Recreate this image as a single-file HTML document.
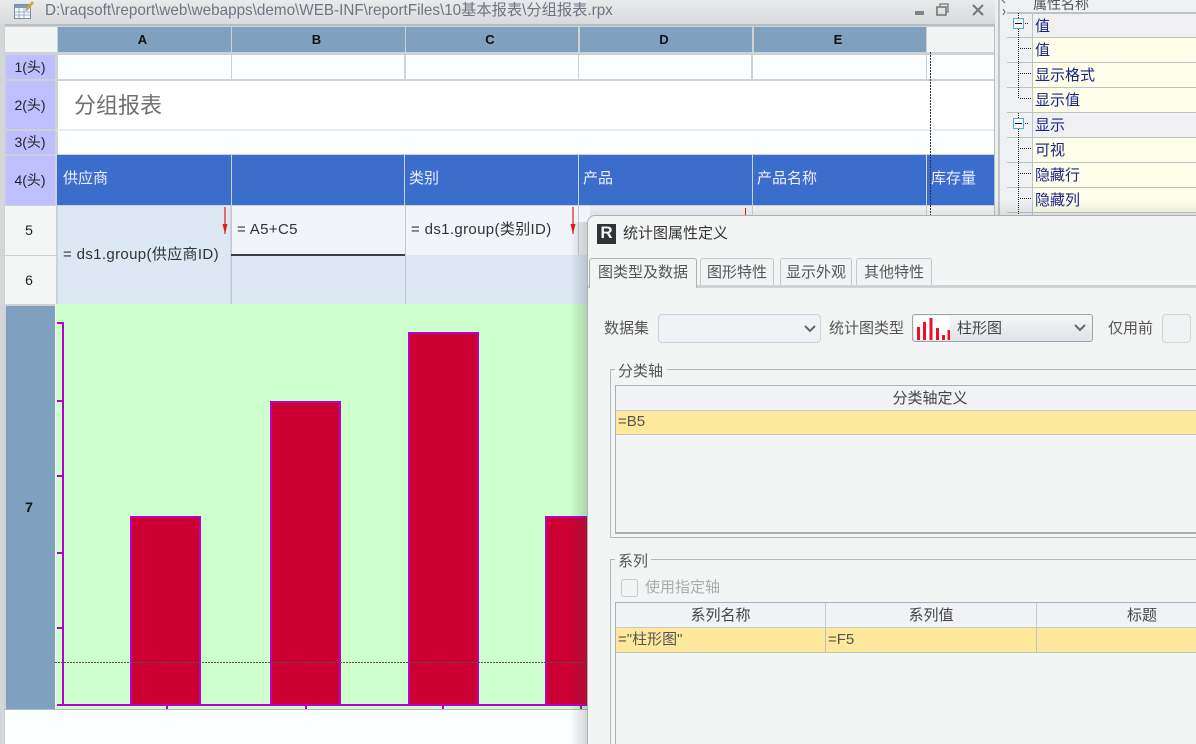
<!DOCTYPE html>
<html style="width:1196px;height:744px;overflow:hidden"><head><meta charset="utf-8">
<style>
*{box-sizing:border-box}
html,body{margin:0;padding:0}
body{width:1196px;height:744px;overflow:hidden;position:relative;background:#e4e6e8;font-family:"Liberation Sans","Noto Sans CJK SC",sans-serif;font-size:14px;color:#222}
div{position:absolute}
.t{white-space:nowrap;line-height:20px}
.hc{background:#7fa0bf;top:27px;height:25px;text-align:center;font-weight:bold;font-size:13px;line-height:26px;color:#111;padding-right:4px}
.rh{left:6px;width:49px;text-align:center;color:#222;font-size:14px;padding-right:1px}
.p{background:#bfbfff}
.w{background:#fcffff}
.blue{background:#3b6dcc;top:155px;height:50px;color:#eef;font-size:15px;line-height:48px;padding-left:5px}
.bar{background:#cc0033;border:2px solid #b800c8;border-bottom:none}
.tick{background:#b800c8}
.prow{left:1033px;width:163px;height:24px;background:#fdfdea;color:#1a2585;font-size:15px;line-height:25px;padding-left:2px}
.prow.g{background:#f0f0f3}
.line{background:#bcc3c6}
.dh{width:1px;background:repeating-linear-gradient(to bottom,#222 0 1px,transparent 1px 2px)}
.dw{height:1px;width:11px;background:repeating-linear-gradient(to right,#222 0 1px,transparent 1px 2px)}
.tab{top:258px;height:27px;background:#f1f3f4;border:1px solid #c3cacd;border-bottom:none;border-radius:3px 3px 0 0;text-align:center;line-height:28px;font-size:15px;color:#555}
.cell{background:#f0f2f5;border-right:1px solid #c3cbd0;border-bottom:1px solid #c3cbd0;text-align:center;font-size:15px;line-height:27px;color:#444;white-space:nowrap}
.yel{background:#fee89b;font-size:15px;line-height:21px;padding-left:2px;color:#555;border-bottom:1px solid #bcc3c6;white-space:nowrap}
.lbl{color:#555;font-size:15px;line-height:20px;white-space:nowrap}
.arrow{width:12px;height:28px}
</style></head>
<body>
<div style="left:0;top:0;width:1196px;height:744px;overflow:hidden;filter:blur(.35px)">

<!-- title bar -->
<div style="left:0;top:0;width:995px;height:24px;background:linear-gradient(#e9eaec,#d8dadc)"></div>
<div style="left:0;top:24px;width:995px;height:2px;background:#b7bdc0"></div>
<svg style="position:absolute;left:13px;top:0" width="22" height="20" viewBox="0 0 22 20"><rect x="1.5" y="4.5" width="16" height="14" fill="#f5f7fa" stroke="#7d8f9f"/><rect x="2" y="5" width="15" height="3" fill="#7a9ac0"/><path d="M6 8v10M11 8v10M2 12h15M2 15h15" stroke="#9db4c9"/><path d="M12 10l7-9 2 2-7 8z" fill="#d9a040"/></svg>
<div class="t" style="left:45px;top:0;font-size:15.25px;color:#6e7580;line-height:21px">D:\raqsoft\report\web\webapps\demo\WEB-INF\reportFiles\10基本报表\分组报表.rpx</div>
<svg style="position:absolute;left:910px;top:0" width="80" height="20" viewBox="0 0 80 20"><rect x="5" y="11" width="9" height="4" fill="#808488"/><rect x="27" y="7" width="9" height="8" fill="none" stroke="#777" stroke-width="1.600"/><path d="M30 6V4h8v8h-2" fill="none" stroke="#777" stroke-width="1.300"/><path d="M63 5l10 10M73 5L63 15" stroke="#777" stroke-width="2"/></svg>

<!-- sheet -->
<div style="left:0;top:24px;width:5px;height:720px;background:#d4d7d9"></div>
<div style="left:4px;top:26px;width:990px;height:718px;background:#cfd2d4"></div>
<div style="left:5px;top:27px;width:52px;height:25px;background:#f3f4f4"></div>
<div class="hc" style="left:58px;width:173px">A</div>
<div class="hc" style="left:232px;width:173px">B</div>
<div class="hc" style="left:406px;width:172px">C</div>
<div class="hc" style="left:580px;width:172px">D</div>
<div class="hc" style="left:754px;width:172px">E</div>
<div style="left:927px;top:27px;width:67px;height:25px;background:#f3f4f4"></div>

<div class="rh p" style="top:55px;height:24px;line-height:24px">1(头)</div>
<div class="rh p" style="top:81px;height:48px;line-height:48px">2(头)</div>
<div class="rh p" style="top:131px;height:23px;line-height:23px">3(头)</div>
<div class="rh p" style="top:156px;height:49px;line-height:48px">4(头)</div>
<div class="rh" style="left:5px;width:51px;top:206px;height:49px;line-height:48px;background:#f4f5f5;padding-right:3px">5</div>
<div class="rh" style="left:5px;width:51px;top:256px;height:48px;line-height:48px;background:#f4f5f5;padding-right:3px">6</div>

<div class="w" style="left:58px;top:55px;width:173px;height:24px"></div>
<div class="w" style="left:232px;top:55px;width:172px;height:24px"></div>
<div class="w" style="left:406px;top:55px;width:172px;height:24px"></div>
<div class="w" style="left:579px;top:55px;width:172px;height:24px"></div>
<div class="w" style="left:753px;top:55px;width:173px;height:24px"></div>
<div class="w" style="left:927px;top:55px;width:67px;height:24px"></div>
<div class="w" style="left:58px;top:81px;width:936px;height:48px;background:#fff"></div>
<div style="left:57px;top:129px;width:937px;height:2px;background:#e8ecec"></div>
<div class="t" style="left:74px;top:93px;font-size:22px;line-height:26px;color:#707070">分组报表</div>
<div class="w" style="left:58px;top:131px;width:936px;height:23px"></div>

<div class="blue" style="left:57px;width:174px;padding-left:6px">供应商</div>
<div class="blue" style="left:232px;width:172px"></div>
<div class="blue" style="left:405px;width:173px;padding-left:4px">类别</div>
<div class="blue" style="left:579px;width:173px;padding-left:4px">产品</div>
<div class="blue" style="left:753px;width:173px;padding-left:4px">产品名称</div>
<div class="blue" style="left:927px;width:67px;padding-left:4px">库存量</div>

<div style="left:58px;top:206px;width:172px;height:99px;background:#dce9f5"></div>
<div style="left:231px;top:206px;width:1px;height:99px;background:#c3c8cc"></div>
<div style="left:232px;top:206px;width:173px;height:49px;background:#f1f4f9"></div>
<div style="left:231px;top:254px;width:174px;height:2px;background:#3c4044"></div>
<div style="left:232px;top:256px;width:173px;height:49px;background:#dce9f5"></div>
<div style="left:405px;top:206px;width:1px;height:99px;background:#c3c8cc"></div>
<div style="left:406px;top:206px;width:172px;height:49px;background:#f1f4f9"></div>
<div style="left:406px;top:255px;width:190px;height:50px;background:#dce9f5"></div>
<div style="left:578px;top:206px;width:174px;height:49px;background:#f1f4f9;border-left:1px solid #c3c8cc"></div>
<div style="left:753px;top:206px;width:173px;height:49px;background:#f6f7f7"></div>
<div style="left:927px;top:206px;width:67px;height:49px;background:#f6f7f7"></div>
<div class="t" style="left:63px;top:245px;font-size:15px;letter-spacing:.35px;color:#333">= ds1.group(供应商ID)</div>
<div class="t" style="left:237px;top:220px;font-size:15px;letter-spacing:.35px;color:#333">= A5+C5</div>
<div class="t" style="left:411px;top:220px;font-size:15px;letter-spacing:.35px;color:#333">= ds1.group(类别ID)</div>
<svg class="arrow" style="position:absolute;left:219px;top:207px" viewBox="0 0 12 28"><path d="M6 0v27" stroke="#e51a1a" stroke-width="1.200"/><path d="M3.500 17l2.500 10 2.500-10z" fill="#e51a1a"/></svg>
<svg class="arrow" style="position:absolute;left:567px;top:207px" viewBox="0 0 12 28"><path d="M6 0v27" stroke="#e51a1a" stroke-width="1.200"/><path d="M3.500 17l2.500 10 2.500-10z" fill="#e51a1a"/></svg>
<div style="left:745px;top:208px;width:1px;height:10px;background:#e51a1a"></div>

<!-- chart -->
<div style="left:5px;top:305px;width:51px;height:405px;background:#cfd2d4"></div>
<div class="rh" style="left:6px;top:306px;width:49px;height:403px;line-height:402px;background:#7fa0bf;font-weight:bold;color:#111;padding-right:3px">7</div>
<div style="left:55px;top:304px;width:1px;height:406px;background:#f4f8f8"></div>
<div style="left:56px;top:304px;width:541px;height:406px;background:#ccffcc"></div>
<div style="left:5px;top:710px;width:592px;height:34px;background:#fbffff"></div>
<div style="left:4px;top:709px;width:600px;height:1px;background:#b5babc"></div>
<div class="tick" style="left:62px;top:322px;width:2px;height:384px"></div>
<div class="tick" style="left:57px;top:322px;width:6px;height:2px"></div>
<div class="tick" style="left:57px;top:400px;width:6px;height:2px"></div>
<div class="tick" style="left:57px;top:475px;width:6px;height:2px"></div>
<div class="tick" style="left:57px;top:552px;width:6px;height:2px"></div>
<div class="tick" style="left:57px;top:627px;width:6px;height:2px"></div>
<div class="bar" style="left:130px;top:516px;width:71px;height:189px"></div>
<div class="bar" style="left:270px;top:401px;width:71px;height:304px"></div>
<div class="bar" style="left:408px;top:332px;width:71px;height:373px"></div>
<div class="bar" style="left:545px;top:516px;width:50px;height:189px"></div>
<div class="tick" style="left:57px;top:704px;width:540px;height:2px"></div>
<div class="tick" style="left:166px;top:706px;width:2px;height:3px"></div>
<div class="tick" style="left:305px;top:706px;width:2px;height:3px"></div>
<div class="tick" style="left:442px;top:706px;width:2px;height:3px"></div>
<div class="tick" style="left:580px;top:706px;width:2px;height:3px"></div>
<div style="left:55px;top:662px;width:540px;height:1px;background:repeating-linear-gradient(to right,#555 0 2px,transparent 2px 3px)"></div>
<div style="left:930px;top:52px;height:165px;width:1px;background:repeating-linear-gradient(to bottom,#333 0 2px,transparent 2px 3px)"></div>

<!-- right edge of sheet -->
<div style="left:994px;top:26px;width:1px;height:190px;background:#b9bec0"></div>
<div style="left:995px;top:0;width:3px;height:216px;background:#eceef0"></div>
<div style="left:998px;top:0;width:2px;height:216px;background:#c2c7ca"></div>
<div style="left:1000px;top:0;width:196px;height:216px;background:#eef0f1"></div>
<svg style="position:absolute;left:1000px;top:0" width="7" height="18" viewBox="0 0 7 18"><path d="M2 0l3 3M3 9l2 3-2 3" fill="none" stroke="#666"/></svg>
<div style="left:1007px;top:0;width:189px;height:216px;background:#f0f1f3"></div>
<div class="t" style="left:1033px;top:-6px;font-size:14px;color:#555">属性名称</div>

<div class="line" style="left:1007px;top:12px;width:189px;height:2px"></div>
<div class="prow g" style="top:14px">值</div>
<div class="line" style="left:1007px;top:37px;width:189px;height:1px"></div>
<div class="prow" style="top:38px">值</div>
<div class="line" style="left:1007px;top:62px;width:189px;height:1px"></div>
<div class="prow" style="top:63px">显示格式</div>
<div class="line" style="left:1007px;top:87px;width:189px;height:1px"></div>
<div class="prow" style="top:88px">显示值</div>
<div class="line" style="left:1007px;top:112px;width:189px;height:1px"></div>
<div class="prow g" style="top:113px">显示</div>
<div class="line" style="left:1007px;top:137px;width:189px;height:1px"></div>
<div class="prow" style="top:138px">可视</div>
<div class="line" style="left:1007px;top:162px;width:189px;height:1px"></div>
<div class="prow" style="top:163px">隐藏行</div>
<div class="line" style="left:1007px;top:187px;width:189px;height:1px"></div>
<div class="prow" style="top:188px">隐藏列</div>
<div class="line" style="left:1007px;top:212px;width:189px;height:1px"></div>
<div class="line" style="left:1032px;top:12px;width:1px;height:204px"></div>

<div class="dh" style="left:1018px;top:13px;height:86px"></div>
<div class="dh" style="left:1018px;top:113px;height:103px"></div>
<div class="dw" style="left:1020px;top:48px"></div>
<div class="dw" style="left:1020px;top:73px"></div>
<div class="dw" style="left:1020px;top:98px"></div>
<div class="dw" style="left:1020px;top:148px"></div>
<div class="dw" style="left:1020px;top:173px"></div>
<div class="dw" style="left:1020px;top:198px"></div>
<div style="left:1013px;top:18px;width:11px;height:11px;background:#f8fbfc;border:1px solid #52b0cc"></div>
<div style="left:1015px;top:23px;width:7px;height:1px;background:#111"></div>
<div class="dw" style="left:1025px;top:23px;width:4px"></div>
<div style="left:1013px;top:118px;width:11px;height:11px;background:#f8fbfc;border:1px solid #52b0cc"></div>
<div style="left:1015px;top:123px;width:7px;height:1px;background:#111"></div>
<div class="dw" style="left:1025px;top:123px;width:4px"></div>

<!-- dialog shadow -->
<div style="left:570px;top:222px;width:18px;height:522px;background:linear-gradient(to right,rgba(60,60,60,0),rgba(60,60,60,.22))"></div>
<div style="left:590px;top:200px;width:606px;height:16px;background:linear-gradient(to bottom,rgba(60,60,60,0),rgba(60,60,60,.1))"></div>

<!-- dialog -->
<div style="left:587px;top:215px;width:620px;height:540px;background:#f3f5f5;border:1px solid #aab0b3;border-radius:8px 0 0 0"></div>
<div style="left:597px;top:224px;width:19px;height:20px;background:#2f3336;color:#f4f4f4;font-weight:bold;font-size:17px;line-height:17px;text-align:center;font-family:'Liberation Sans',sans-serif">R</div>
<div class="t" style="left:623px;top:224px;font-size:15px;color:#333">统计图属性定义</div>

<div style="left:588px;top:285px;width:608px;height:3px;background:#cdd3d6"></div>
<div class="tab" style="left:589px;width:108px;height:30px;top:258px;z-index:2;background:#f3f5f5;border-color:#aab2b6">图类型及数据</div>
<div class="tab" style="left:700px;width:74px">图形特性</div>
<div class="tab" style="left:780px;width:72px">显示外观</div>
<div class="tab" style="left:856px;width:76px">其他特性</div>

<div class="lbl" style="left:604px;top:319px">数据集</div>
<div style="left:658px;top:314px;width:163px;height:29px;background:#f0f3f5;border:1px solid #cbd3db;border-radius:4px"></div>
<svg style="position:absolute;left:803px;top:323px" width="14" height="12" viewBox="0 0 14 12"><path d="M2 3l5 5 5-5" fill="none" stroke="#666" stroke-width="2"/></svg>
<div class="lbl" style="left:829px;top:319px">统计图类型</div>
<div style="left:912px;top:314px;width:181px;height:28px;background:linear-gradient(#f5f6f7,#dfe4e7);border:1px solid #9da5aa;border-radius:3px"></div>
<svg style="position:absolute;left:914px;top:316px" width="36" height="24" viewBox="0 0 36 24"><rect width="36" height="24" fill="#fff"/><path d="M4.500 24v-13M10.500 24v-18M17 24v-22M23.500 24v-12M29.500 24v-5M35 24v-10" stroke="#f00f2a" stroke-width="3"/></svg>
<div class="lbl" style="left:957px;top:319px;color:#444">柱形图</div>
<svg style="position:absolute;left:1073px;top:322px" width="14" height="12" viewBox="0 0 14 12"><path d="M2 3l5 5 5-5" fill="none" stroke="#666" stroke-width="2"/></svg>
<div class="lbl" style="left:1108px;top:319px">仅用前</div>
<div style="left:1162px;top:314px;width:29px;height:29px;background:#f0f3f4;border:1px solid #d0d6d9;border-radius:4px"></div>

<!-- 分类轴 -->
<div style="left:610px;top:369px;width:600px;height:169px;border:1px solid #b4babd"></div>
<div class="lbl" style="left:615px;top:362px;background:#f3f5f5;padding:0 4px 0 3px">分类轴</div>
<div style="left:615px;top:385px;width:590px;height:149px;background:#f3f5f5;border:1px solid #a9b1b5;border-bottom-width:2px"></div>
<div class="cell" style="left:616px;top:386px;width:628px;height:25px;line-height:25px;border-right:0">分类轴定义</div>
<div class="yel" style="left:616px;top:411px;width:580px;height:24px">=B5</div>

<!-- 系列 -->
<div style="left:610px;top:559px;width:600px;height:200px;border:1px solid #b4babd"></div>
<div class="lbl" style="left:615px;top:552px;background:#f3f5f5;padding:0 3px">系列</div>
<div style="left:621px;top:579px;width:17px;height:18px;background:#f3f5f5;border:1.500px solid #c3ccd3;border-radius:3px"></div>
<div class="lbl" style="left:645px;top:578px;color:#a8adb0">使用指定轴</div>
<div style="left:615px;top:602px;width:590px;height:150px;background:#f3f5f5;border:1px solid #a9b1b5"></div>
<div class="cell" style="left:616px;top:603px;width:210px;height:25px;line-height:26px">系列名称</div>
<div class="cell" style="left:826px;top:603px;width:211px;height:25px;line-height:26px">系列值</div>
<div class="cell" style="left:1037px;top:603px;width:210px;height:25px;line-height:26px;border-right:0">标题</div>
<div class="yel" style="left:616px;top:628px;width:210px;height:25px;border-right:1px solid #bcc3c6;line-height:23px">="柱形图"</div>
<div class="yel" style="left:826px;top:628px;width:211px;height:25px;border-right:1px solid #bcc3c6;line-height:23px">=F5</div>
<div class="yel" style="left:1037px;top:628px;width:159px;height:25px"></div>

</div>
</body></html>
